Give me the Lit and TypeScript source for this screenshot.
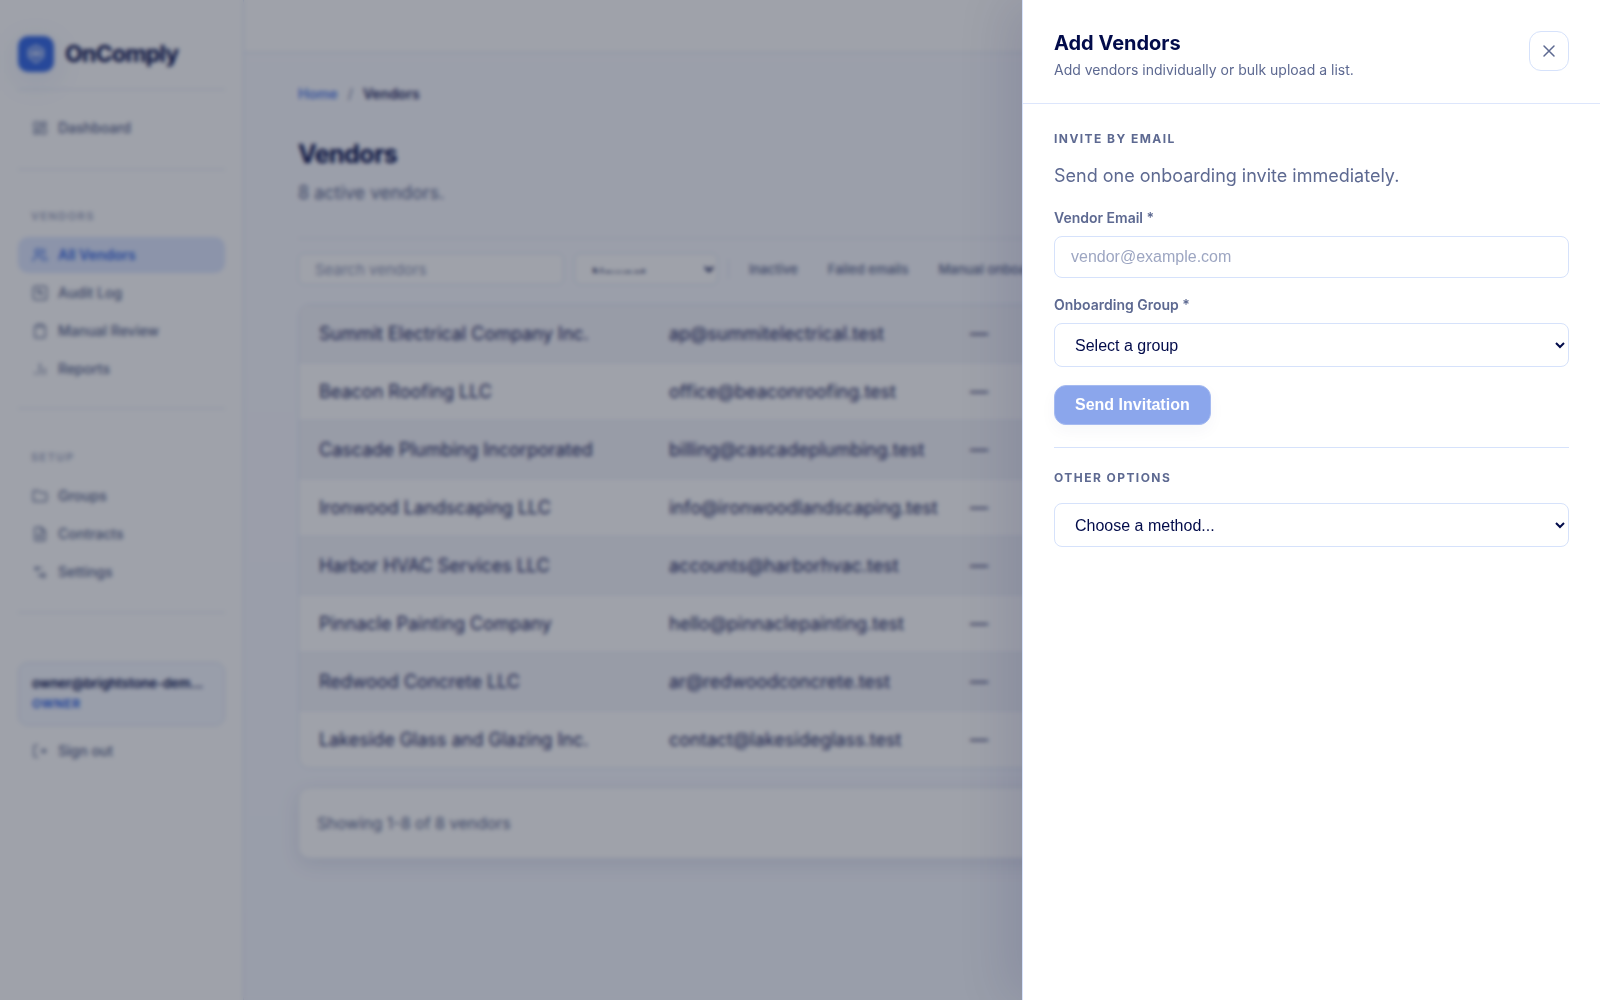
import { LitElement, html, css, svg } from "lit";
import { customElement } from "lit/decorators.js";

const icons = {
  dashboard: svg`<rect x="3" y="3" width="7" height="9" rx="1"/><rect x="14" y="3" width="7" height="5" rx="1"/><rect x="14" y="12" width="7" height="9" rx="1"/><rect x="3" y="16" width="7" height="5" rx="1"/>`,
  users: svg`<path d="M16 21v-2a4 4 0 0 0-4-4H6a4 4 0 0 0-4 4v2"/><circle cx="9" cy="7" r="4"/><path d="M22 21v-2a4 4 0 0 0-3-3.9M16 3.1a4 4 0 0 1 0 7.8"/>`,
  audit: svg`<rect x="2" y="2" width="20" height="20" rx="3"/><path d="M7 8h6M7 12h3l2-2 2 5 1-3h2"/>`,
  clipboard: svg`<rect x="8" y="2" width="8" height="4" rx="1"/><path d="M16 4h2a2 2 0 0 1 2 2v14a2 2 0 0 1-2 2H6a2 2 0 0 1-2-2V6a2 2 0 0 1 2-2h2"/>`,
  chart: svg`<path d="M12 20V4M19 20V11M5 20v-3"/>`,
  folder: svg`<path d="M2 19V5a1 1 0 0 1 1-1h6l3 3h8a2 2 0 0 1 2 2v9a2 2 0 0 1-2 2H3a1 1 0 0 1-1-1z"/>`,
  file: svg`<path d="M14 2H6a2 2 0 0 0-2 2v16a2 2 0 0 0 2 2h12a2 2 0 0 0 2-2V8z"/><path d="M14 2v6h6M8 13h8M8 17h8"/>`,
  sliders: svg`<path d="M4 6h11M9 17h5"/><circle cx="17" cy="17" r="3"/><circle cx="7" cy="7" r="2"/>`,
  logout: svg`<path d="M9 21H5a2 2 0 0 1-2-2V5a2 2 0 0 1 2-2h4M21 12H12M17 9l4 3-4 3"/>`,
};

const vendors = [
  ["Summit Electrical Company Inc.", "ap@summitelectrical.test"],
  ["Beacon Roofing LLC", "office@beaconroofing.test"],
  ["Cascade Plumbing Incorporated", "billing@cascadeplumbing.test"],
  ["Ironwood Landscaping LLC", "info@ironwoodlandscaping.test"],
  ["Harbor HVAC Services LLC", "accounts@harborhvac.test"],
  ["Pinnacle Painting Company", "hello@pinnaclepainting.test"],
  ["Redwood Concrete LLC", "ar@redwoodconcrete.test"],
  ["Lakeside Glass and Glazing Inc.", "contact@lakesideglass.test"],
];

@customElement("side-nav")
class SideNav extends LitElement {
  static styles = css`
    :host { display: block; box-sizing: border-box; width: 244px; flex: none; padding: 36px 18px; background: #fff; border-right: 1px solid #dbe4f8; box-shadow: 4px 0 16px rgba(30, 50, 110, 0.05); }
    * { box-sizing: border-box; }
    .brand { display: flex; align-items: center; gap: 11px; padding-bottom: 17px; border-bottom: 1px solid #e2e8f5; font-size: 23px; line-height: 36px; font-weight: 700; letter-spacing: -0.03em; color: #020b4a; text-decoration: none; }
    .mark { display: grid; place-items: center; width: 36px; height: 36px; border-radius: 10px; background: #376ae4; color: #fff; box-shadow: 0 8px 32px rgba(29, 79, 216, 0.12); }
    .group { display: flex; flex-direction: column; gap: 2px; padding: 36px 0 21px; border-bottom: 1px solid #e2e8f5; }
    .first { padding: 20px 0 23px; }
    .setup { padding: 38px 0 22px; }
    .caption { padding: 0 13px; margin: 0 0 9px; font-size: 11px; line-height: 20px; font-weight: 600; letter-spacing: 0.13em; color: #a0a8c4; }
    .item { display: flex; align-items: center; gap: 10px; width: 100%; height: 36px; padding: 0 14px; border: 0; border-radius: 10px; background: none; font: 500 14px/20px Inter, sans-serif; color: #5d6991; text-decoration: none; }
    .active { background: #dfe8ff; color: #376ae4; font-weight: 600; }
    .icon { width: 16px; height: 16px; fill: none; stroke: currentColor; stroke-width: 1.8; stroke-linecap: round; stroke-linejoin: round; }
    .user { margin: 49px 0 7px; padding: 10px 13px 11px; border: 1px solid #dbe4f8; border-radius: 10px; background: #f5f8ff; font-size: 13px; line-height: 21px; font-weight: 600; color: #020b4a; }
    .email { overflow: hidden; white-space: nowrap; text-overflow: ellipsis; }
    .role { font-size: 12px; line-height: 20px; font-weight: 700; letter-spacing: 0.05em; color: #376ae4; }
  `;
  item(label: string, icon: keyof typeof icons, active = false) {
    return html`<a class="item ${active ? "active" : ""}" href="#"><svg class="icon" viewBox="0 0 24 24">${icons[icon]}</svg>${label}</a>`;
  }
  render() {
    return html`
      <a class="brand" href="#"><span class="mark"><svg width="20" height="20" viewBox="0 0 24 24" fill="none" stroke="currentColor" stroke-width="2" stroke-linejoin="round" opacity="0.85"><path d="M12 2l8.500 4.500v9L12 22l-8.500-6.500v-9z"/><circle cx="12" cy="11.500" r="3.500"/><path d="M4 11.500h16"/></svg></span>OnComply</a>
      <nav>
        <div class="group first">${this.item("Dashboard", "dashboard")}</div>
        <div class="group">
          <p class="caption">VENDORS</p>
          ${this.item("All Vendors", "users", true)}${this.item("Audit Log", "audit")}${this.item("Manual Review", "clipboard")}${this.item("Reports", "chart")}
        </div>
        <div class="group setup">
          <p class="caption">SETUP</p>
          ${this.item("Groups", "folder")}${this.item("Contracts", "file")}${this.item("Settings", "sliders")}
        </div>
      </nav>
      <div class="user"><div class="email">owner@brightstone-dem...</div><div class="role">OWNER</div></div>
      <button class="item"><svg class="icon" viewBox="0 0 24 24">${icons.logout}</svg>Sign out</button>
    `;
  }
}

@customElement("vendor-page")
class VendorPage extends LitElement {
  static styles = css`
    :host { display: block; flex: 1; min-width: 0; background: linear-gradient(#fafbff, #f6f8ff); }
    * { box-sizing: border-box; }
    .topbar { height: 53px; background: #fff; border-bottom: 1px solid #dbe4f8; }
    .content { padding: 30px 54px; }
    .crumbs { display: flex; gap: 10px; font-size: 14px; line-height: 22px; color: #6b769c; }
    .crumbs a { color: #5580ea; font-weight: 600; text-decoration: none; }
    .crumbs b { color: #1c2560; font-weight: 600; }
    h1 { margin: 32px 0 8px; font-size: 25px; line-height: 34px; font-weight: 700; letter-spacing: -0.02em; color: #020b4a; }
    .sub { margin: 0; padding-bottom: 31px; border-bottom: 1px solid #e2e8f5; font-size: 18px; line-height: 28px; color: #5d6991; }
    .tools { display: flex; align-items: center; gap: 10px; padding: 14px 0 19px; }
    .search, .sort { height: 32px; border: 1px solid #dbe4f8; border-radius: 6px; background: #fff; }
    .search { width: 266px; padding: 0 16px; font: 400 15px/20px Inter, sans-serif; }
    .search::placeholder { color: #8f98b8; opacity: 1; }
    .sort { width: 144px; padding: 11px 13px; font: 400 16px "Liberation Sans", sans-serif; color: #020b4a; }
    .filters { display: flex; gap: 30px; padding-left: 20px; border-left: 1px solid #dbe4f8; }
    .filters button { padding: 0; border: 0; background: none; font: 500 13px/20px Inter, sans-serif; color: #5d6991; white-space: nowrap; }
    .frame { overflow: hidden; border: 1px solid #dbe4f8; border-radius: 12px; background: #fff; }
    table { width: 100%; border-collapse: collapse; table-layout: fixed; text-align: left; font-size: 18px; line-height: 25px; color: #1c2560; }
    td { padding: 16px 20px; border-bottom: 1px solid #e6ecf9; white-space: nowrap; }
    tr:nth-child(odd) td { background: #f4f5fa; }
    tr:last-child td { border-bottom: 0; }
    .name { width: 350px; }
    .email { width: 301px; }
    .summary { margin-top: 18px; padding: 23px 18px; border: 1px solid #e2e8f5; border-radius: 12px; background: #fff; box-shadow: 0 6px 20px rgba(30, 50, 110, 0.1); font-size: 16px; line-height: 24px; color: #5d6991; }
  `;
  render() {
    return html`
      <header class="topbar"></header>
      <main class="content">
        <nav class="crumbs"><a href="#">Home</a><span>/</span><b>Vendors</b></nav>
        <h1>Vendors</h1>
        <p class="sub">8 active vendors.</p>
        <div class="tools">
          <input class="search" type="search" aria-label="Search vendors" placeholder="Search vendors" />
          <select class="sort" aria-label="Sort"><option>Newest</option></select>
          <div class="filters"><button>Inactive</button><button>Failed emails</button><button>Manual onboarding</button></div>
        </div>
        <div class="frame">
          <table>
            <tbody>${vendors.map(([name, email]) => html`<tr><td class="name">${name}</td><td class="email">${email}</td><td>—</td></tr>`)}</tbody>
          </table>
        </div>
        <div class="summary">Showing 1-8 of 8 vendors</div>
      </main>
    `;
  }
}

@customElement("add-vendors-drawer")
class AddVendorsDrawer extends LitElement {
  static styles = css`
    :host { display: block; box-sizing: border-box; background: #fff; border-left: 1px solid #d6e2fb; box-shadow: -16px 0 48px rgba(2, 11, 74, 0.1); color: #5d6991; }
    * { box-sizing: border-box; }
    header { display: flex; justify-content: space-between; align-items: flex-start; padding: 31px 31px 32px; border-bottom: 1px solid #dde6fc; }
    h2 { margin: 0; font-size: 20px; line-height: 24px; font-weight: 700; color: #020b4a; }
    p { margin: 0; }
    .lead { margin-top: 4px; font-size: 14px; line-height: 22px; }
    header > div { margin-bottom: -10px; }
    .close { display: grid; place-items: center; width: 40px; height: 40px; padding: 0; border: 1px solid #d6e2fb; border-radius: 12px; background: #fff; color: #5d6991; }
    section { margin: 0 31px; padding: 25px 0 22px; }
    section + section { border-top: 1px solid #d6e2fb; padding-top: 20px; }
    h3 { margin: 0; font-size: 12px; line-height: 20px; font-weight: 700; letter-spacing: 0.12em; }
    .note { margin: 13px 0 17px; font-size: 18px; line-height: 28px; }
    label { display: block; margin-bottom: 7px; font-size: 14px; line-height: 22px; font-weight: 600; }
    .field { display: block; width: 100%; border: 1px solid #d6e2fb; border-radius: 8px; background: #fff; padding: 0 16px; font: 400 16px/20px "Liberation Sans", sans-serif; color: #020b4a; }
    input.field { height: 42px; margin-bottom: 16px; }
    select.field { height: 44px; }
    .field::placeholder { color: #9da6c2; opacity: 1; }
    .send { display: block; height: 40px; margin-top: 18px; padding: 0 20px; border: 1px solid #a5baf0; border-radius: 12px; background: #8ba6ec; color: #fff; font: 700 16px/20px "Liberation Sans", sans-serif; box-shadow: 0 6px 16px rgba(30, 50, 110, 0.04); }
    .method { margin-top: 15px; }
  `;
  render() {
    return html`
      <header>
        <div><h2>Add Vendors</h2><p class="lead">Add vendors individually or bulk upload a list.</p></div>
        <button class="close" aria-label="Close"><svg width="18" height="18" viewBox="0 0 18 18" fill="none" stroke="currentColor" stroke-width="1.5" stroke-linecap="round"><path d="M4 4l10 10M14 4L4 14"/></svg></button>
      </header>
      <section>
        <h3>INVITE BY EMAIL</h3>
        <p class="note">Send one onboarding invite immediately.</p>
        <label for="email">Vendor Email *</label>
        <input class="field" id="email" type="email" placeholder="vendor@example.com" />
        <label for="group">Onboarding Group *</label>
        <select class="field" id="group"><option>Select a group</option></select>
        <button class="send" disabled>Send Invitation</button>
      </section>
      <section>
        <h3 id="other">OTHER OPTIONS</h3>
        <select class="field method" aria-labelledby="other"><option>Choose a method...</option></select>
      </section>
    `;
  }
}

@customElement("app-root")
class AppRoot extends LitElement {
  static styles = css`
    :host { display: block; font-family: Inter, sans-serif; }
    .app { display: flex; min-height: 100vh; }
    .scrim { position: fixed; inset: 0; background: rgba(15, 23, 42, 0.4); backdrop-filter: blur(2px); }
    .drawer { position: fixed; inset: 0 0 0 auto; width: 578px; max-width: 100%; overflow-y: auto; }
  `;
  render() {
    return html`
      <div class="app"><side-nav></side-nav><vendor-page></vendor-page></div>
      <div class="scrim"></div>
      <add-vendors-drawer class="drawer"></add-vendors-drawer>
    `;
  }
}
